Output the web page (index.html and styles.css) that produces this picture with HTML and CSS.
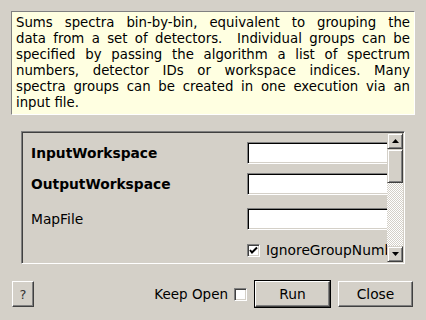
FILE: index.html
```html
<!DOCTYPE html>
<html>
<head>
<meta charset="utf-8">
<link rel="stylesheet" href="styles.css">
</head>
<body>
<div class="dialog">
  <div class="desc">
    <span class="ln">Sums spectra bin-by-bin, equivalent to grouping the</span>
    <span class="ln">data from a set of detectors.&nbsp; Individual groups can be</span>
    <span class="ln">specified by passing the algorithm a list of spectrum</span>
    <span class="ln">numbers, detector IDs or workspace indices. Many</span>
    <span class="ln">spectra groups can be created in one execution via an</span>
    <span class="ln last">input file.</span>
  </div>
  <div class="frame">
    <div class="fields">
      <div class="lbl bold">InputWorkspace</div><div class="input"></div>
      <div class="lbl bold">OutputWorkspace</div><div class="input"></div>
      <div class="lbl">MapFile</div><div class="input"></div>
      <div></div>
      <div class="check"><span class="box"><svg width="9" height="9" viewBox="0 0 9 9"><path d="M1 4 L3 6.5 L8 1.5" fill="none" stroke="#000" stroke-width="2"/></svg></span><span>IgnoreGroupNumber</span></div>
    </div>
    <div class="scrollbar">
      <div class="sb-btn"><svg width="7" height="4" viewBox="0 0 7 4"><path d="M0 4 L3.5 0 L7 4 Z" fill="#000"/></svg></div>
      <div class="sb-thumb"></div>
      <div class="sb-track"></div>
      <div class="sb-btn"><svg width="7" height="4" viewBox="0 0 7 4"><path d="M0 0 L7 0 L3.5 4 Z" fill="#000"/></svg></div>
    </div>
  </div>
  <div class="actions">
    <button class="btn help">?</button>
    <span class="spacer"></span>
    <span class="keep">Keep Open</span>
    <span class="box"></span>
    <button class="btn default">Run</button>
    <button class="btn">Close</button>
  </div>
</div>
</body>
</html>
```
FILE: styles.css
```css
html, body {
  margin: 0;
  padding: 0;
  background: #d4d0c8;
}
body {
  font-family: "DejaVu Sans", sans-serif;
  font-size: 13px;
  color: #000;
  width: 426px;
  height: 320px;
  overflow: hidden;
}
.dialog {
  padding: 11px 11px 0 11px;
  display: flex;
  flex-direction: column;
}
.desc {
  box-sizing: border-box;
  width: 404px;
  height: 104px;
  background: #ffffe1;
  border: 1px solid;
  border-color: #808080 #ffffff #ffffff #808080;
  padding: 3px 4px 3px 4px;
  line-height: 16px;
  font-size: 13.3px;
}
.ln {
  display: block;
  text-align: justify;
  text-align-last: justify;
  white-space: nowrap;
}
.ln.last {
  text-align-last: left;
}
.frame {
  box-sizing: border-box;
  margin: 16px 0 0 10px;
  width: 384px;
  height: 133px;
  border: 1px solid;
  border-color: #808080 #ffffff #ffffff #808080;
  box-shadow: inset 1px 1px #404040, inset -1px -1px #d4d0c8;
  padding: 1px;
  display: flex;
}
.fields {
  flex: 1;
  overflow: hidden;
  padding: 9px 0 0 8px;
  display: grid;
  grid-template-columns: 216px 160px;
  grid-template-rows: 31px 35px 35px auto;
  align-items: start;
  font-size: 13.8px;
}
.lbl {
  line-height: 22px;
  height: 22px;
  white-space: nowrap;
}
.bold {
  font-weight: bold;
}
.input {
  box-sizing: border-box;
  height: 22px;
  background: #fff;
  border: 1px solid;
  border-color: #808080 #ffffff #ffffff #808080;
  box-shadow: inset 1px 1px #000000, inset -1px -1px #d4d0c8;
}
.check {
  display: flex;
  align-items: center;
  gap: 6px;
  white-space: nowrap;
  height: 14px;
}
.box {
  box-sizing: border-box;
  width: 13px;
  height: 13px;
  flex: none;
  background: #fff;
  border: 1px solid;
  border-color: #808080 #ffffff #ffffff #808080;
  box-shadow: inset 1px 1px #404040, inset -1px -1px #d4d0c8;
  display: flex;
  align-items: center;
  justify-content: center;
}
.scrollbar {
  width: 16px;
  display: flex;
  flex-direction: column;
  flex: none;
}
.sb-btn, .sb-thumb {
  box-sizing: border-box;
  border: 1px solid;
  border-color: #d4d0c8 #404040 #404040 #d4d0c8;
  box-shadow: inset 1px 1px #ffffff, inset -1px -1px #808080;
  background: #d4d0c8;
}
.sb-btn {
  height: 16px;
  display: flex;
  align-items: center;
  justify-content: center;
}
.sb-thumb {
  height: 34px;
}
.sb-track {
  flex: 1;
  background: repeating-conic-gradient(#ffffff 0 25%, #d4d0c8 0 50%) 0 0 / 2px 2px;
}
.actions {
  margin-top: 16px;
  display: flex;
  align-items: center;
  height: 28px;
  padding: 0 2px 0 1px;
  font-size: 13.5px;
}
.spacer {
  flex: 1;
}
.keep {
  margin-right: 6px;
}
.btn {
  box-sizing: border-box;
  font-family: "DejaVu Sans", sans-serif;
  font-size: 13.8px;
  color: #000;
  background: #d4d0c8;
  border: 1px solid;
  border-color: #ffffff #404040 #404040 #ffffff;
  box-shadow: inset -1px -1px #808080;
  width: 75px;
  height: 26px;
  padding: 0;
  margin-left: 8px;
}
.help {
  width: 22px;
  margin-left: 0;
  color: #333;
  font-size: 13px;
}
.default {
  outline: 1px solid #000;
  margin-left: 8px;
}
```
